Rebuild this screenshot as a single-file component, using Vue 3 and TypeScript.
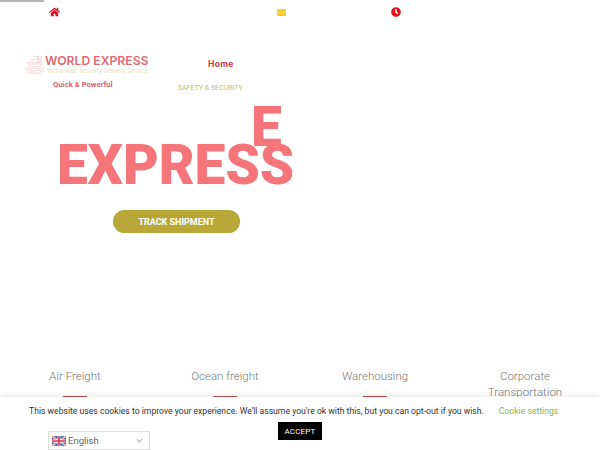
<script setup lang="ts">
const services: string[] = ['Air Freight', 'Ocean freight', 'Warehousing', 'Corporate Transportation']
</script>

<template>
  <div class="page">
    <div class="rule"></div>
    <div class="topbar">
      <svg class="ic home" viewBox="0 0 576 512"><path fill="#e2101c" d="M280.4 148.3 96 300.1V464a16 16 0 0 0 16 16l112-.3a16 16 0 0 0 16-16V368a16 16 0 0 1 16-16h64a16 16 0 0 1 16 16v95.6a16 16 0 0 0 16 16l112 .4a16 16 0 0 0 16-16V300L295.7 148.3a12.2 12.2 0 0 0-15.3 0zM571.600 251.500 488 182.600V44a12 12 0 0 0-12-12h-56a12 12 0 0 0-12 12v72.600L318.500 43a48 48 0 0 0-61 0L4.300 251.500a12 12 0 0 0-1.600 16.900l25.500 31A12 12 0 0 0 45.200 301l235.200-193.700a12.200 12.200 0 0 1 15.300 0L530.900 301a12 12 0 0 0 16.900-1.600l25.500-31a12 12 0 0 0-1.700-16.900z"/></svg>
      <svg class="ic mail" viewBox="0 0 512 512"><path fill="#f9c51f" d="M502.300 190.800c3.900-3.100 9.700-.2 9.700 4.700V400c0 26.500-21.500 48-48 48H48c-26.500 0-48-21.500-48-48V195.600c0-5 5.700-7.800 9.700-4.700 22.400 17.400 52.100 39.500 154.100 113.600 21.100 15.400 56.700 47.800 92.200 47.600 35.700.3 72-32.800 92.300-47.600 102-74.100 131.600-96.300 154-113.700zM256 320c23.200.4 56.600-29.200 73.400-41.400 132.700-96.300 142.800-104.700 173.400-128.700 5.800-4.500 9.200-11.500 9.200-18.900v-19c0-26.500-21.500-48-48-48H48C21.500 64 0 85.500 0 112v19c0 7.400 3.400 14.300 9.200 18.900 30.600 23.900 40.700 32.400 173.400 128.700 16.800 12.200 50.200 41.800 73.400 41.400z"/></svg>
      <svg class="ic clock" viewBox="0 0 512 512"><path fill="#e2101c" d="M256 8C119 8 8 119 8 256s111 248 248 248 248-111 248-248S393 8 256 8zm57.100 350.100L224.900 294c-3.100-2.300-4.900-5.900-4.900-9.700V116c0-6.600 5.400-12 12-12h48c6.600 0 12 5.400 12 12v137.700l63.500 46.200c5.400 3.900 6.500 11.400 2.600 16.800l-28.200 38.800c-3.900 5.300-11.400 6.500-16.800 2.600z"/></svg>
    </div>

    <header class="header">
      <div class="brand">
        <div class="logo">
          <svg class="ship" viewBox="0 0 22 22" fill="none" stroke="#efb0b1" stroke-width="0.6">
            <path d="M3 9h16l-2 5H5z" />
            <path d="M5 11h12M6 6h9v3M9 3h5v3M15 1.500v4.500M17.500 2v7" />
            <path d="M0 16q2.500-1.500 5 0t5 0 5 0 6 0M1 18.500q2.500-1.500 5 0t5 0 5 0 5 0M3 21q2-1 4 0t4 0 4 0 4 0" />
          </svg>
          <div class="logo-text">
            <div class="logo-name">WORLD EXPRESS</div>
            <div class="logo-tag">World wide Security Delivery Service</div>
          </div>
        </div>
        <div class="quick">Quick &amp; Powerful</div>
      </div>
      <div class="nav">
        <div class="home-link">Home</div>
        <div class="safety">SAFETY &amp; SECURITY</div>
      </div>
    </header>

    <section class="hero">
      <h1 class="title">EXPRESS<span class="drop">E</span></h1>
      <button class="track">TRACK SHIPMENT</button>
    </section>

    <section class="services">
      <div v-for="s in services" :key="s" class="service">
        <div class="service-name">{{ s }}</div>
        <div class="service-bar"></div>
      </div>
    </section>

    <div class="cookie">
      <div class="cookie-line">
        <span class="cookie-msg">This website uses cookies to improve your experience. We'll assume you're ok with this, but you can opt-out if you wish.</span>
        <span class="cookie-link">Cookie settings</span>
      </div>
      <button class="accept">ACCEPT</button>
    </div>

    <div class="lang">
      <svg class="flag" viewBox="0 0 30 20">
        <rect width="30" height="20" rx="3" fill="#2a3f8f" />
        <path d="M0 0l30 20M30 0L0 20" stroke="#fff" stroke-width="4" />
        <path d="M0 0l30 20M30 0L0 20" stroke="#d23a4a" stroke-width="1.500" />
        <path d="M15 0v20M0 10h30" stroke="#fff" stroke-width="6" />
        <path d="M15 0v20M0 10h30" stroke="#d23a4a" stroke-width="3.500" />
      </svg>
      <span class="lang-name">English</span>
      <svg class="chev" viewBox="0 0 10 6" fill="none" stroke="#666" stroke-width="1"><path d="M1 1l4 4 4-4" /></svg>
    </div>
  </div>
</template>

<style>
html, body { margin: 0; background: #fff; overflow: hidden; }
</style>

<style scoped>
.page {
  position: relative;
  width: 600px;
  height: 450px;
  overflow: hidden;
  background: #fff;
  font-family: Roboto, sans-serif;
}
.rule { width: 44px; height: 2px; background: #b4b4b4; }
.topbar {
  display: flex;
  align-items: center;
  height: 20px;
  padding: 0 0 0 49px;
}
.ic { display: block; }
.home { width: 11px; height: 10px; margin-right: 217px; }
.mail { width: 9px; height: 9px; margin-right: 105px; }
.clock { width: 10px; height: 10px; }

.header {
  display: flex;
  align-items: flex-start;
  height: 86px;
  padding: 30px 0 0 25px;
  box-sizing: border-box;
}
.brand { width: 153px; }
.logo { display: flex; align-items: center; height: 24px; }
.ship { width: 20px; height: 20px; margin-right: 0; flex: none; }
.logo-text { line-height: 1; }
.logo-name {
  font-family: Inter, sans-serif;
  font-weight: 600;
  font-size: 12.200px;
  line-height: 13px;
  color: #e4686f;
  white-space: nowrap;
}
.logo-tag {
  font-family: Inter, sans-serif;
  font-weight: 500;
  font-size: 5.700px;
  line-height: 7px;
  margin-left: 2px;
  color: #e9dfc4;
  white-space: nowrap;
}
.quick {
  margin: 3px 0 0 28px;
  font-weight: 700;
  font-size: 7.700px;
  line-height: 11px;
  color: #d9626e;
  white-space: nowrap;
}
.nav { position: relative; }
.home-link {
  margin-left: 30px;
  padding-top: 6px;
  font-family: Inter, sans-serif;
  font-weight: 700;
  font-size: 8.500px;
  line-height: 12px;
  letter-spacing: 0.3px;
  color: #bf3a4c;
}
.safety {
  margin-top: 13px;
  font-size: 7px;
  line-height: 10px;
  color: #c6c06a;
  white-space: nowrap;
}

.hero {
  display: flex;
  flex-direction: column;
  align-items: flex-start;
  height: 252px;
  padding: 27px 0 0 57px;
  box-sizing: border-box;
}
.title {
  position: relative;
  margin: 0;
  font-weight: 900;
  font-size: 55px;
  line-height: 60px;
  color: #f6757b;
  white-space: nowrap;
}
.drop {
  position: absolute;
  left: 194px;
  top: -38px;
}
.track {
  margin: 15px 0 0 56px;
  width: 127px;
  height: 23px;
  border: 0;
  border-radius: 12px;
  padding: 0;
  background: #b7a837;
  color: #fff;
  font-family: Roboto, sans-serif;
  font-weight: 700;
  font-size: 9px;
}

.services {
  display: grid;
  grid-template-columns: repeat(4, 150px);
  padding-top: 8px;
}
.service { text-align: center; }
.service-name {
  width: 90px;
  margin: 0 auto;
  font-weight: 300;
  font-size: 11.500px;
  line-height: 16px;
  color: #777;
}
.service-bar { width: 24px; height: 2px; margin: 12px auto 0; background: #c94a4e; }

.cookie {
  position: absolute;
  left: 0;
  right: 0;
  bottom: 0;
  height: 53px;
  background: #fff;
  box-shadow: 0 -2px 6px rgba(0, 0, 0, 0.08);
  text-align: center;
}
.cookie-line {
  display: flex;
  justify-content: flex-start;
  padding: 8px 0 0 29px;
  font-size: 8.650px;
  line-height: 12px;
  white-space: nowrap;
}
.cookie-msg { color: #333; }
.cookie-link { margin-left: 15px; color: #8db255; }
.accept {
  display: block;
  width: 44px;
  height: 18px;
  margin: 5px 0 0 278px;
  padding: 0;
  border: 0;
  background: #000;
  color: #fff;
  font-family: Roboto, sans-serif;
  font-size: 8px;
  letter-spacing: 0.2px;
}
.lang {
  position: absolute;
  left: 48px;
  top: 431px;
  width: 102px;
  height: 19px;
  box-sizing: border-box;
  border: 1px solid #ddd;
  background: #fff;
  display: flex;
  align-items: center;
  padding: 0 6px 0 3px;
}
.flag { width: 14px; height: 10px; margin-right: 2px; }
.lang-name { font-size: 9.500px; color: #666; flex: 1; }
.chev { width: 7px; height: 5px; }
</style>
